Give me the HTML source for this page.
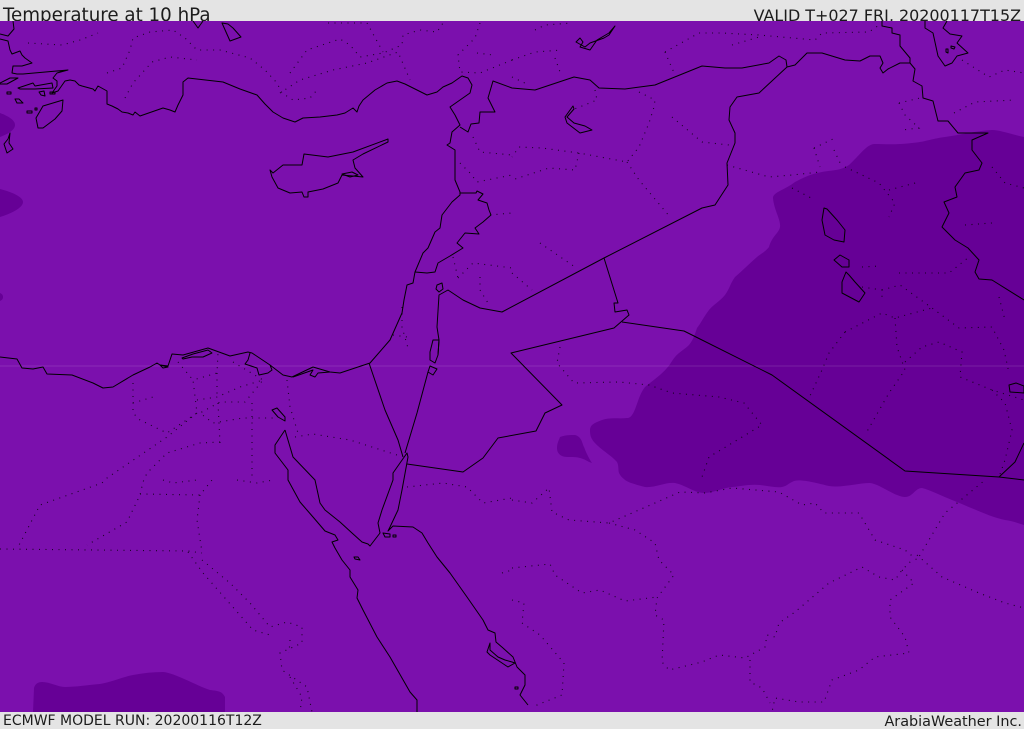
<!DOCTYPE html>
<html><head><meta charset="utf-8"><title>Temperature at 10 hPa</title>
<style>
html,body{margin:0;padding:0;background:#e4e4e4;width:1024px;height:729px;overflow:hidden}
svg{display:block}
text{font-family:"DejaVu Sans","Liberation Sans",sans-serif;fill:#1c1c1c}
.c{fill:none;stroke:#000;stroke-width:1;stroke-linejoin:round}
.d{fill:none;stroke:#000;stroke-width:1.1;stroke-dasharray:1 5.5;opacity:.8}
</style></head><body>
<svg width="1024" height="729" viewBox="0 0 1024 729" xmlns="http://www.w3.org/2000/svg">
<rect width="1024" height="729" fill="#e4e4e4"/>
<text x="3" y="21" font-size="18.26">Temperature at 10 hPa</text>
<text x="1021" y="21" font-size="15.95" text-anchor="end">VALID T+027 FRI, 20200117T15Z</text>
<rect y="21" width="1024" height="691" fill="#7b10ad"/>
<g fill="#660096">
<path d="M1024 137C1010 134 1000 130 992 130C975 131 960 135 945 137C930 139 925 142 912 143C895 145 885 144 874 144C866 145 860 155 849 165C840 171 832 170 822 172C810 174 803 178 795 182C785 190 773 192 773 198C774 210 781 220 780 227C779 233 772 236 769 247C765 252 762 253 757 257C748 265 742 271 735 277C730 284 730 288 725 295C719 302 713 305 709 310C703 318 701 323 697 328C694 337 693 340 689 345C684 350 679 352 675 357C671 362 670 365 667 368C660 376 652 381 645 387C638 396 637 408 632 415C630 418 628 418 627 418C618 419 610 417 602 420C594 423 590 425 590 430C590 436 591 438 594 442C601 450 611 455 617 462C619 466 618 470 619 473C621 477 623 478 625 480C628 482 630 483 645 487C655 488 665 482 675 483C685 485 695 493 704 493C713 493 722 488 732 487C742 486 750 484 760 485C768 486 776 488 782 487C787 486 789 483 792 482C797 479 805 480 829 486C842 488 858 483 870 483C880 484 895 497 905 497C913 497 915 488 922 488C930 490 942 496 952 500C970 507 990 517 1005 520C1012 521 1018 523 1024 525Z"/>
<path d="M560 437C565 435 570 435 575 435C582 437 582 443 584 447C587 455 590 460 592 463C588 462 585 459 580 458C573 456 567 458 562 456C558 454 557 451 557 448C557 443 559 440 560 437Z"/>
<path d="M33 712L34 688C35 684 38 682 42 682C50 682 58 687 65 687C75 687 88 685 100 684C112 682 122 677 133 675C143 673 153 672 163 672C175 673 195 685 210 690C218 691 222 691 225 697L225 712Z"/>
<path d="M0 113C8 116 15 120 15 125C15 130 8 134 0 137Z"/>
<path d="M0 189C12 192 23 197 23 202C23 208 10 214 0 217Z"/>
<path d="M0 293C2 294 3 295 3 297C3 299 2 300 0 301Z"/>
</g>
<rect y="365.5" width="1024" height="1" fill="#fff" opacity=".12"/>
<g class="d">
<path d="M28 43L62 45L80 40L93 35L98 33"/>
<path d="M107 73L122 68L130 50L133 38L150 32L173 30L185 38L197 50L220 50L250 58L265 70L277 83L282 93L293 100L310 98L317 90"/>
<path d="M125 98L133 83L152 62L170 57L197 60"/>
<path d="M290 73L307 50L340 39L350 45L360 57L383 53L402 45L403 35L420 30L437 32L443 23"/>
<path d="M280 93L300 80L333 70L367 63L398 52L410 80"/>
<path d="M328 23L367 23L383 52"/>
<path d="M480 23L475 38L458 55L460 72L480 73L512 60"/>
<path d="M477 53L493 55"/>
<path d="M473 137L480 152L512 155"/>
<path d="M460 163L470 173L477 182L512 175"/>
<path d="M490 215L512 213"/>
<path d="M512 60L535 52L562 50"/>
<path d="M555 58L560 72"/>
<path d="M535 30L545 25L572 23"/>
<path d="M512 77L529 85"/>
<path d="M665 52L699 33L722 33L759 35L815 40L822 33L869 32L882 23"/>
<path d="M665 52L675 75"/>
<path d="M732 45L759 37"/>
<path d="M595 90L597 100L572 110"/>
<path d="M639 92L655 100L654 107L649 123L639 147L627 162L579 153L542 148L519 147L512 157"/>
<path d="M672 117L702 142L729 145"/>
<path d="M579 153L575 170L549 168L512 180"/>
<path d="M627 162L639 180L670 217"/>
<path d="M727 165L769 177L792 175L820 172"/>
<path d="M814 148L835 138"/>
<path d="M814 148L820 167"/>
<path d="M834 150L842 167"/>
<path d="M899 103L920 98"/>
<path d="M899 103L905 115L919 128L902 130"/>
<path d="M954 113L975 102L1015 100"/>
<path d="M962 60L989 77L1005 70L1024 73"/>
<path d="M792 188L815 200"/>
<path d="M845 167L879 183L895 203L889 217"/>
<path d="M889 190L919 182"/>
<path d="M992 167L1005 183L1024 188"/>
<path d="M965 225L992 223"/>
<path d="M862 287L882 290L882 302"/>
<path d="M882 290L900 285L932 308L959 328L992 327L1004 350L1009 373"/>
<path d="M845 332L882 313L895 318L932 308"/>
<path d="M845 332L829 353L822 370L809 398"/>
<path d="M895 318L897 347L905 370L889 393L865 435"/>
<path d="M905 362L922 347L939 342L962 352L960 377L992 390L1024 400"/>
<path d="M992 390L1005 403L1012 430L1005 460L999 477"/>
<path d="M899 273L949 273L969 257"/>
<path d="M862 267L880 266"/>
<path d="M999 297L1005 320"/>
<path d="M512 273L532 290"/>
<path d="M540 243L575 267"/>
<path d="M560 347L557 363L574 383L619 382L649 385L672 393L719 397L744 403L762 425L709 457L702 477"/>
<path d="M402 307L402 327L408 348"/>
<path d="M393 335L407 337"/>
<path d="M453 257L458 278"/>
<path d="M458 278L473 263L497 266L512 268"/>
<path d="M480 277L480 290L488 303"/>
<path d="M133 383L133 413L140 420L167 433L197 413L193 380L217 373L218 353"/>
<path d="M197 400L217 397L240 387L263 380L245 402L220 402L200 413L213 423L243 418L273 418"/>
<path d="M287 380L290 407L298 433"/>
<path d="M178 362L193 380"/>
<path d="M233 362L263 380"/>
<path d="M217 373L217 397"/>
<path d="M133 403L153 397"/>
<path d="M218 403L220 443"/>
<path d="M252 403L252 480"/>
<path d="M197 413L167 437L107 478L102 483L40 505L18 547"/>
<path d="M220 442L200 443L167 453L147 473L143 482L140 495L127 522L87 545"/>
<path d="M140 494L200 495L212 480"/>
<path d="M163 480L173 483L197 480"/>
<path d="M200 495L197 520L202 552"/>
<path d="M0 549L188 551L202 553"/>
<path d="M188 552L203 573L253 630L270 635"/>
<path d="M202 560L230 583L250 603L270 627L287 622L302 627L302 643L280 653L282 670L307 687L312 712"/>
<path d="M290 640L289 653"/>
<path d="M290 677L302 697L300 712"/>
<path d="M237 480L257 483L273 480"/>
<path d="M295 437L313 434L350 440L400 456"/>
<path d="M407 487L443 483L467 487L483 503L512 498"/>
<path d="M512 500L532 503L549 488L552 512L569 520L609 523L655 503L680 492L705 493L732 488L779 492L802 505L815 503L824 513L859 513L875 540L905 550L917 560L945 513L985 480"/>
<path d="M917 555L942 577L979 593L1005 603L1024 608"/>
<path d="M609 523L635 530L655 543L659 560L674 575L657 598L655 615L664 620L662 662L669 670L702 662L719 655L745 658L765 647L767 635L775 637L779 623L795 612L829 583L862 567L879 577L895 580L902 570L912 560"/>
<path d="M902 570L914 583L890 600L890 617L905 637L909 653L875 657L859 670L832 680L824 702L799 702L775 698L772 712"/>
<path d="M750 660L750 682L762 688L770 703"/>
<path d="M512 568L550 564L555 575L582 593L600 590L625 601L657 597"/>
<path d="M512 600L524 603L522 623L540 635L564 663L562 695L532 707"/>
<path d="M502 573L512 570"/>
</g>
<g class="c">
<path d="M13 21L14 29L8 36L0 34M0 39L8 41L10 50L12 54L20 51L22 55L25 58L32 63L22 66L13 66L12 73L17 74L23 74L68 70L57 73L53 78L57 81L57 86L52 93L58 91L65 81L70 80L75 81L79 85L82 86L93 89L95 91L98 86L107 91L107 104L112 106L118 109L122 112L128 113L133 115L135 112L140 116L163 108L170 110L175 112L178 105L183 95L183 82L188 78L223 82L240 89L257 95L265 104L273 112L283 118L295 122L303 118L320 117L337 115L345 113L353 108L357 112L359 106L363 100L375 90L387 83L397 81L405 84L427 95L437 92L443 87L452 83L462 76L468 78L472 85L470 93L460 100L450 107L455 115L460 125L452 132L450 143L447 145L455 150L455 180L460 192L460 195L452 202L442 215L440 228L435 232L428 248L423 253L415 272L413 283L407 285L404 300L402 313L390 340L370 363L340 373L330 372L313 367L292 377L283 375L270 365L252 353L248 352L230 356L208 348L183 355L172 354L168 366L160 365L157 363L150 367L133 375L113 387L103 388L93 383L72 375L47 374L43 367L33 369L22 368L17 359L0 357"/>
<path d="M460 127L468 132L471 124L479 123L480 112L495 112L488 98L493 81L512 88L535 90L574 77L590 80L599 88L625 89L655 85L702 66L725 68L742 68L769 63L779 56L786 60L787 67L795 65L807 53L822 53L845 60L860 61L870 56L880 56L883 63L880 68L883 73L888 69L900 63L910 63"/>
<path d="M460 193L476 193L477 191L483 194L478 200L487 203L489 210L491 215L483 222L475 228L479 234L465 233L457 243L463 248L450 256L438 263L435 272L427 273L415 272"/>
<path d="M882 21L882 26L892 28L892 33L900 35L900 46L910 58L910 63L915 69L913 81L922 86L923 98L933 101L938 121L948 121L958 133L988 133L972 140L972 150L982 163L979 170L965 173L955 187L957 197L944 202L949 213L942 227L955 240L968 248L979 260L975 272L979 279L992 280L1024 300"/>
<path d="M925 21L925 28L933 33L938 56L945 66L952 63L957 56L968 53L957 43L962 36L950 34L943 28L947 21"/>
<path d="M951 46L955 47L954 49L951 48Z"/>
<path d="M946 49L948 49L948 53L946 52Z"/>
<path d="M787 67L759 93L737 97L730 107L729 120L735 133L735 143L727 163L728 185L715 205L702 208L604 258L502 312L480 308L463 300L448 290L439 295L437 327L439 340"/>
<path d="M604 258L618 303L614 303L615 312L627 310L629 315L614 328L511 353L562 405L545 413L536 431L498 438L483 458L463 472L407 464"/>
<path d="M622 322L684 331L772 375L905 471L999 477L1024 480"/>
<path d="M999 477L1015 462L1024 443"/>
<path d="M369 363L385 410L398 440L403 457"/>
<path d="M285 430L275 445L275 453L288 470L288 480L300 502L313 517L325 531L335 535L338 540L332 542L335 548L342 560L350 570L350 577L358 590L357 598L363 610L377 637L390 657L410 692L417 700L417 712"/>
<path d="M285 430L293 457L315 480L320 503L325 510L340 522L352 533L362 542L368 544L370 546L380 533L378 523L382 510L393 480L393 473L407 453L408 457L402 490L398 510L390 527L388 531L393 526L413 527L422 533L428 543L437 557L450 573L467 597L483 620L488 630L495 633L496 642L503 648L513 657L517 667L525 675L525 685L520 695L528 705"/>
<path d="M428 372L417 413L405 453"/>
<path d="M439 340L438 355"/>
<path d="M270 170L273 173L283 165L302 165L304 154L328 157L353 152L388 139L388 142L363 154L353 160L355 168L363 177L342 175L338 183L323 189L308 192L308 197L304 197L302 192L290 193L278 188L272 177Z"/>
<path d="M342 174L352 172L358 175L350 177Z"/>
<path d="M63 100L62 111L55 119L43 128L38 128L36 118L43 106Z"/>
<path d="M10 133L8 139L4 144L7 153L13 149L9 143Z"/>
<path d="M222 23L228 24L233 28L241 37L230 41Z"/>
<path d="M193 21L198 28L203 21"/>
<path d="M0 83L10 78L18 78L7 84L0 84Z"/>
<path d="M18 88L33 83L35 86L52 83L53 88L35 89L20 89Z"/>
<path d="M7 92L11 92L11 94L7 94Z"/>
<path d="M15 99L19 99L23 103L17 103Z"/>
<path d="M39 92L44 91L45 96L41 95Z"/>
<path d="M50 92L55 92L55 94L50 94Z"/>
<path d="M27 111L32 111L32 113L27 113Z"/>
<path d="M35 108h2v2h-2z"/>
<path d="M576 42L580 38L583 42L580 47L590 50L597 40L609 33L615 26L609 35L604 38L590 43L585 47Z"/>
<path d="M573 106L565 117L567 123L580 133L592 130L585 126L574 123L567 117L574 109Z"/>
<path d="M824 208L822 220L825 235L834 240L844 242L845 230L837 220L827 209Z"/>
<path d="M834 260L840 255L849 260L849 267L842 267Z"/>
<path d="M846 272L842 282L842 293L859 302L865 293L855 282L849 275Z"/>
<path d="M1009 385L1016 383L1024 386L1024 393L1010 392Z"/>
<path d="M182 358L193 354L208 350L212 353L203 357L192 357L183 359Z"/>
<path d="M250 353L248 360L245 364L257 368L259 375L268 373L272 370L270 365"/>
<path d="M293 377L313 370L310 375L315 377L318 373L330 372"/>
<path d="M160 365L168 367L163 368Z"/>
<path d="M433 340L439 340L438 355L435 363L430 360L430 352Z"/>
<path d="M430 366L437 369L433 375L428 372Z"/>
<path d="M437 285L442 283L443 289L439 292L436 289Z"/>
<path d="M272 410L277 408L285 417L285 421L278 417Z"/>
<path d="M354 557L358 557L360 560L355 559Z"/>
<path d="M383 533L390 534L390 537L385 537Z"/>
<path d="M393 535L396 535L396 537L393 537Z"/>
<path d="M490 643L487 652L490 655L505 665L508 667L515 663L512 662L505 660L498 657L490 650Z"/>
<path d="M515 687h3v2h-3z"/>
</g>
<text x="3" y="725" font-size="14">ECMWF MODEL RUN: 20200116T12Z</text>
<text x="1022" y="726" font-size="14.4" text-anchor="end">ArabiaWeather Inc.</text>
</svg>
</body></html>
